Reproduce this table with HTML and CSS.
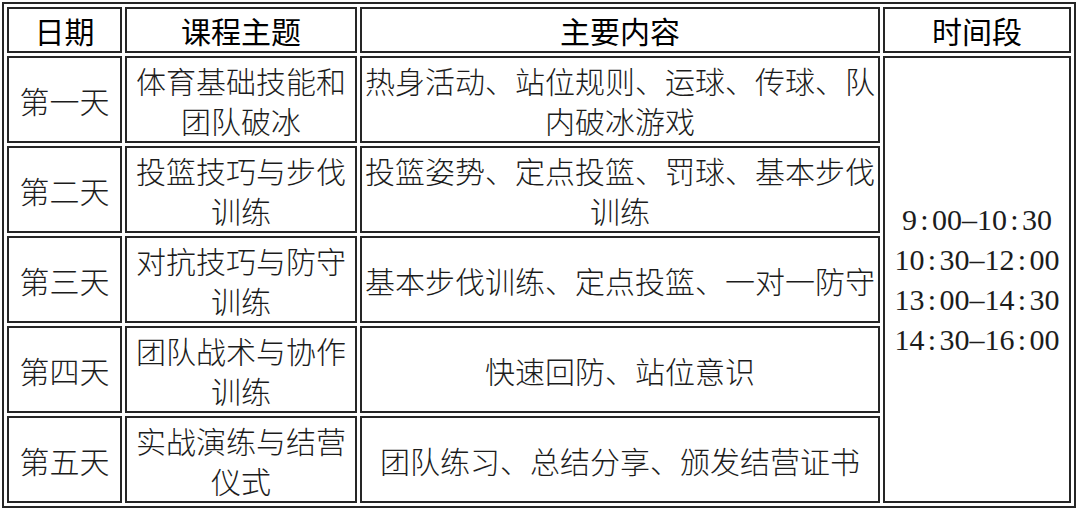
FILE: index.html
```html
<!DOCTYPE html>
<html lang="zh-CN">
<head>
<meta charset="utf-8">
<title>课程安排</title>
<link rel="stylesheet" href="styles.css">
</head>
<body>
<table class="schedule">
  <thead>
    <tr class="head-row">
      <th class="c-day">日期</th>
      <th class="c-topic">课程主题</th>
      <th class="c-content">主要内容</th>
      <th class="c-time">时间段</th>
    </tr>
  </thead>
  <tbody>
    <tr class="day-row">
      <td>第一天</td>
      <td>体育基础技能和团队破冰</td>
      <td>热身活动、站位规则、运球、传球、队内破冰游戏</td>
      <td class="time" rowspan="5">
        <div class="slot">9<span class="half">:</span>00<span class="half">–</span>10<span class="half">:</span>30</div>
        <div class="slot">10<span class="half">:</span>30<span class="half">–</span>12<span class="half">:</span>00</div>
        <div class="slot">13<span class="half">:</span>00<span class="half">–</span>14<span class="half">:</span>30</div>
        <div class="slot">14<span class="half">:</span>30<span class="half">–</span>16<span class="half">:</span>00</div>
      </td>
    </tr>
    <tr class="day-row">
      <td>第二天</td>
      <td>投篮技巧与步伐训练</td>
      <td>投篮姿势、定点投篮、罚球、基本步伐训练</td>
    </tr>
    <tr class="day-row">
      <td>第三天</td>
      <td>对抗技巧与防守训练</td>
      <td>基本步伐训练、定点投篮、一对一防守</td>
    </tr>
    <tr class="day-row">
      <td>第四天</td>
      <td>团队战术与协作训练</td>
      <td>快速回防、站位意识</td>
    </tr>
    <tr class="day-row">
      <td>第五天</td>
      <td>实战演练与结营仪式</td>
      <td>团队练习、总结分享、颁发结营证书</td>
    </tr>
  </tbody>
</table>
</body>
</html>
```

FILE: styles.css
```css
html, body {
  margin: 0;
  padding: 0;
  background: #ffffff;
}

.schedule {
  margin: 2px 0 0 2px;
  width: 1074px;
  table-layout: fixed;
  border-collapse: separate;
  border-spacing: 3px;
  border: 2px solid #262626;
  color: #111111;
  font-family: "Noto Sans CJK SC", sans-serif;
  font-size: 30px;
  line-height: 40px;
}

.schedule th,
.schedule td {
  box-sizing: border-box;
  border: 2px solid #262626;
  padding: 0 2px;
  text-align: center;
  vertical-align: middle;
}

.schedule th {
  font-weight: 400;
  color: #000000;
}

.schedule td {
  font-weight: 300;
  color: #1c1c1c;
}

.c-day { width: 115px; }
.c-topic { width: 232px; }
.c-content { width: 520px; }
.c-time { width: 188px; }

.head-row { height: 46px; }
.day-row { height: 87px; }

.time {
  font-family: "Liberation Serif", serif;
  font-size: 30px;
}

.slot {
  line-height: 40px;
  white-space: nowrap;
}

.half {
  display: inline-block;
  width: 0.5em;
  text-align: center;
}
```
